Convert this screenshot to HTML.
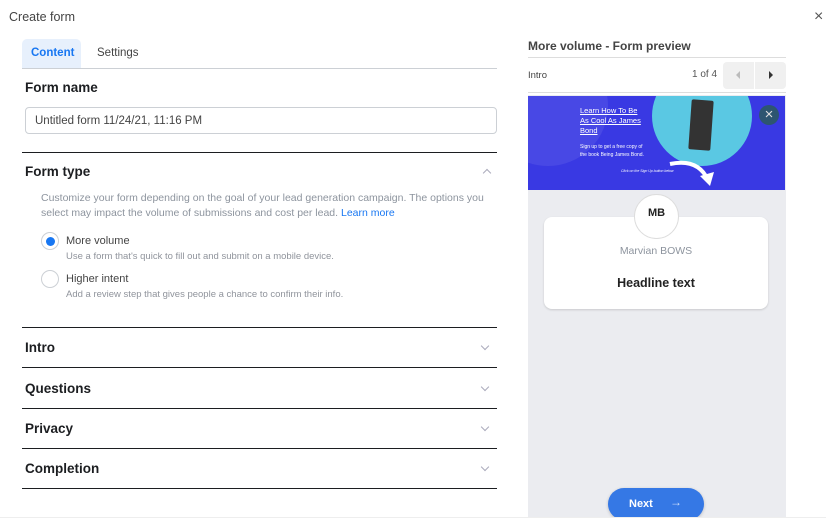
<!DOCTYPE html>
<html><head><style>
*{box-sizing:border-box;margin:0;padding:0}
body{width:826px;height:525px;background:#fff;font-family:"Liberation Sans",sans-serif;position:relative;overflow:hidden;color:#1c1e21}
.a{position:absolute}
.hl{position:absolute;left:22px;width:475px;height:1px;background:#1c1e21}
.sec{position:absolute;left:25px;font-size:13.5px;font-weight:bold;color:#1c1e21}
.chev{position:absolute;left:482px;width:6px;height:6px;border-right:1.3px solid #aab;border-bottom:1.3px solid #aab;transform:rotate(45deg)}
</style></head><body>
<div class="a" style="left:9px;top:10px;font-size:12.5px;color:#444">Create form</div>
<div class="a" style="left:814px;top:8px;font-size:16px;color:#555">×</div>
<div class="a" style="left:22px;top:39px;width:59px;height:29px;background:#e7f0fc;border-radius:5px 5px 0 0"></div>
<div class="a" style="left:31px;top:47px;font-size:11.5px;font-weight:bold;color:#1877f2">Content</div>
<div class="a" style="left:97px;top:47px;font-size:11.5px;color:#444">Settings</div>
<div class="a" style="left:22px;top:68px;width:475px;height:1px;background:#ccd0d5"></div>
<div class="sec" style="top:80px">Form name</div>
<div class="a" style="left:25px;top:107px;width:472px;height:27px;border:1px solid #ccd0d5;border-radius:4px;font-size:11.5px;color:#444;padding:7px 0 0 9px">Untitled form 11/24/21, 11:16 PM</div>
<div class="hl" style="top:152px"></div>
<div class="sec" style="top:164px">Form type</div>
<div class="a" style="left:484px;top:170px;width:6px;height:6px;border-left:1.3px solid #aab;border-top:1.3px solid #aab;transform:rotate(45deg)"></div>
<div class="a" style="left:41px;top:191px;font-size:10.5px;color:#8d949e;line-height:15px;width:450px">Customize your form depending on the goal of your lead generation campaign. The options you select may impact the volume of submissions and cost per lead. <span style="color:#1877f2">Learn more</span></div>
<div class="a" style="left:41px;top:232px;width:18px;height:18px;border:1px solid #ccd0d5;border-radius:50%"><div style="margin:3.5px;width:9px;height:9px;border-radius:50%;background:#1877f2"></div></div>
<div class="a" style="left:66px;top:235px;font-size:11px;color:#444">More volume</div>
<div class="a" style="left:66px;top:251px;font-size:9.5px;color:#90949c">Use a form that's quick to fill out and submit on a mobile device.</div>
<div class="a" style="left:41px;top:270px;width:18px;height:18px;border:1px solid #ccd0d5;border-radius:50%"></div>
<div class="a" style="left:66px;top:273px;font-size:11px;color:#444">Higher intent</div>
<div class="a" style="left:66px;top:289px;font-size:9.5px;color:#90949c">Add a review step that gives people a chance to confirm their info.</div>
<div class="hl" style="top:327px"></div>
<div class="sec" style="top:340px">Intro</div><div class="chev" style="top:343px"></div>
<div class="hl" style="top:367px"></div>
<div class="sec" style="top:381px">Questions</div><div class="chev" style="top:384px"></div>
<div class="hl" style="top:408px"></div>
<div class="sec" style="top:421px">Privacy</div><div class="chev" style="top:424px"></div>
<div class="hl" style="top:448px"></div>
<div class="sec" style="top:461px">Completion</div><div class="chev" style="top:464px"></div>
<div class="hl" style="top:488px"></div>

<div class="a" style="left:528px;top:39px;font-size:12px;font-weight:bold;color:#444">More volume - Form preview</div>
<div class="a" style="left:528px;top:57px;width:258px;height:1px;background:#ddd"></div>
<div class="a" style="left:528px;top:70px;font-size:9.5px;color:#444">Intro</div>
<div class="a" style="left:692px;top:69px;font-size:10px;color:#555">1 of 4</div>
<div class="a" style="left:723px;top:62px;width:31px;height:27px;background:#f0f0f0;border-radius:4px 0 0 4px"></div>
<div class="a" style="left:755px;top:62px;width:31px;height:27px;background:#f0f0f0;border-radius:0 4px 4px 0"></div>
<div class="a" style="left:736px;top:71px;width:0;height:0;border-top:4px solid transparent;border-bottom:4px solid transparent;border-right:4px solid #bbb"></div>
<div class="a" style="left:769px;top:71px;width:0;height:0;border-top:4px solid transparent;border-bottom:4px solid transparent;border-left:4px solid #333"></div>
<div class="a" style="left:528px;top:92px;width:258px;height:1px;background:#ddd"></div>
<div class="a" style="left:528px;top:95px;width:258px;height:425px;background:#ebecf0"></div>
<div class="a" style="left:528px;top:96px;width:257px;height:94px;background:#3939e3;overflow:hidden">
 <div class="a" style="left:-40px;top:-50px;width:120px;height:120px;border-radius:50%;background:rgba(255,255,255,.08)"></div>
 <div class="a" style="left:124px;top:-30px;width:100px;height:100px;border-radius:50%;background:#5ac8e3"></div>
 <div class="a" style="left:162px;top:4px;width:22px;height:50px;background:#333;border-radius:2px;transform:rotate(4deg)"></div>
 <div class="a" style="left:52px;top:10px;font-size:7.5px;color:#fff;line-height:10px;text-decoration:underline">Learn How To Be<br>As Cool As James<br>Bond</div>
 <div class="a" style="left:52px;top:47px;font-size:5px;color:#fff;line-height:8px">Sign up to get a free copy of<br>the book Being James Bond.</div>
 <div class="a" style="left:93px;top:73px;font-size:3.5px;color:#fff;font-style:italic">Click on the Sign Up button below</div>
 <svg class="a" style="left:140px;top:60px" width="50" height="34"><path d="M2 8 Q30 2 40 24" stroke="#fff" stroke-width="4" fill="none"/><path d="M32 20 L42 30 L46 16 Z" fill="#fff"/></svg>
 <div class="a" style="left:231px;top:9px;width:20px;height:20px;border-radius:50%;background:#2d5570;color:#ddd;font-size:15px;line-height:19px;text-align:center">×</div>
</div>
<div class="a" style="left:544px;top:217px;width:224px;height:92px;background:#fff;border-radius:8px;box-shadow:0 1px 2px rgba(0,0,0,.15)"></div>
<div class="a" style="left:634px;top:194px;width:45px;height:45px;border-radius:50%;background:#fff;border:1px solid #ddd;font-size:11px;font-weight:bold;text-align:center;line-height:36px;color:#222">MB</div>
<div class="a" style="left:544px;top:245px;width:224px;text-align:center;font-size:10.5px;color:#8d949e">Marvian BOWS</div>
<div class="a" style="left:544px;top:276px;width:224px;text-align:center;font-size:12.5px;font-weight:bold;color:#222">Headline text</div>
<div class="a" style="left:608px;top:488px;width:96px;height:32px;border-radius:16px;background:#3578e5;box-shadow:0 1px 3px rgba(0,0,0,.2)"></div>
<div class="a" style="left:629px;top:498px;font-size:11px;font-weight:bold;color:#fff">Next</div>
<div class="a" style="left:670px;top:495px;font-size:12px;color:#cfe0fa">→</div>
<div class="a" style="left:0;top:517px;width:826px;height:8px;background:#fff;border-top:1px solid #eee"></div>
</body></html>
